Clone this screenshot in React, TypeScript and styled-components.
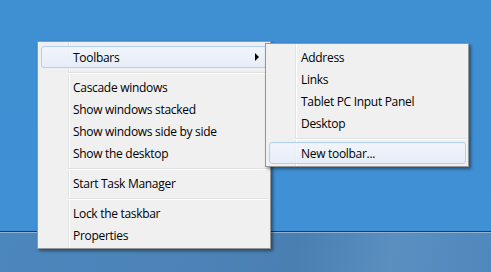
import React from "react";
import styled, { createGlobalStyle } from "styled-components";

const Global = createGlobalStyle`
  html, body { margin: 0; padding: 0; }
  body { width: 491px; height: 272px; overflow: hidden; font-family: "Open Sans", "Noto Sans", sans-serif; }
  #root { width: 491px; height: 272px; }
`;

const Screen = styled.div`
  position: relative;
  width: 491px;
  height: 272px;
  display: flex;
  flex-direction: column;
  overflow: hidden;
`;

const Desktop = styled.div`
  flex: 1;
  background: linear-gradient(180deg, #3f8fd3 0%, #3f90d5 100%);
`;

const Taskbar = styled.div`
  height: 40px;
  border-top: 1px solid #1b3a58;
  box-shadow: inset 0 1px 0 #8db2d4;
  background: linear-gradient(100deg, #4b86bc 0%, #4b83b8 40%, #4a7fb2 60%, #5a8fc0 80%, #4f88bd 100%);
`;

const Menu = styled.div<{ $left: number; $top: number; $width: number; $gutter: number; $pt: number }>`
  position: absolute;
  left: ${(p) => p.$left}px;
  top: ${(p) => p.$top}px;
  width: ${(p) => p.$width}px;
  box-sizing: border-box;
  border: 1px solid #979797;
  padding: ${(p) => p.$pt}px 2px 2px 3px;
  background:
    linear-gradient(90deg, transparent ${(p) => p.$gutter}px, #e2e3e3 ${(p) => p.$gutter}px, #e2e3e3 ${(p) => p.$gutter + 1}px, #ffffff ${(p) => p.$gutter + 1}px, #ffffff ${(p) => p.$gutter + 2}px, transparent ${(p) => p.$gutter + 2}px),
    #f0f0f0;
  box-shadow: 2px 2px 3px rgba(0, 0, 0, 0.45);
  display: flex;
  flex-direction: column;
`;

const Item = styled.div<{ $hover?: boolean; $indent: number }>`
  position: relative;
  height: 22px;
  box-sizing: border-box;
  display: flex;
  align-items: center;
  padding-left: ${(p) => p.$indent}px;
  font-size: 12px;
  color: #000;
  letter-spacing: -0.3px;
  border: 1px solid ${(p) => (p.$hover ? "#aecff7" : "transparent")};
  border-radius: 3px;
  background: ${(p) =>
    p.$hover
      ? "linear-gradient(180deg, rgba(242,246,252,0.85) 0%, rgba(229,237,248,0.85) 100%)"
      : "transparent"};
  white-space: nowrap;
`;

const Separator = styled.div<{ $indent: number }>`
  height: 8px;
  display: flex;
  align-items: center;
  padding-left: ${(p) => p.$indent}px;
  &::before {
    content: "";
    flex: 1;
    height: 1px;
    background: #e0e0e0;
    box-shadow: 0 1px 0 #ffffff;
  }
`;

const Arrow = styled.span`
  position: absolute;
  left: 213px;
  top: 6px;
  width: 0;
  height: 0;
  border-top: 4px solid transparent;
  border-bottom: 4px solid transparent;
  border-left: 4px solid #000;
`;

export default function App() {
  const mi = 31;
  const si = 31;
  return (
    <>
      <Global />
      <Screen>
        <Desktop />
        <Taskbar />
        <Menu $left={37} $top={41} $width={234} $gutter={30} $pt={4}>
          <Item $hover $indent={mi}>
            Toolbars
            <Arrow />
          </Item>
          <Separator $indent={27} />
          <Item $indent={mi}>Cascade windows</Item>
          <Item $indent={mi}>Show windows stacked</Item>
          <Item $indent={mi}>Show windows side by side</Item>
          <Item $indent={mi}>Show the desktop</Item>
          <Separator $indent={27} />
          <Item $indent={mi}>Start Task Manager</Item>
          <Separator $indent={27} />
          <Item $indent={mi}>Lock the taskbar</Item>
          <Item $indent={mi}>Properties</Item>
        </Menu>
        <Menu $left={265} $top={43} $width={204} $gutter={29} $pt={2}>
          <Item $indent={si}>Address</Item>
          <Item $indent={si}>Links</Item>
          <Item $indent={si}>Tablet PC Input Panel</Item>
          <Item $indent={si}>Desktop</Item>
          <Separator $indent={26} />
          <Item $hover $indent={si}>New toolbar...</Item>
        </Menu>
      </Screen>
    </>
  );
}
